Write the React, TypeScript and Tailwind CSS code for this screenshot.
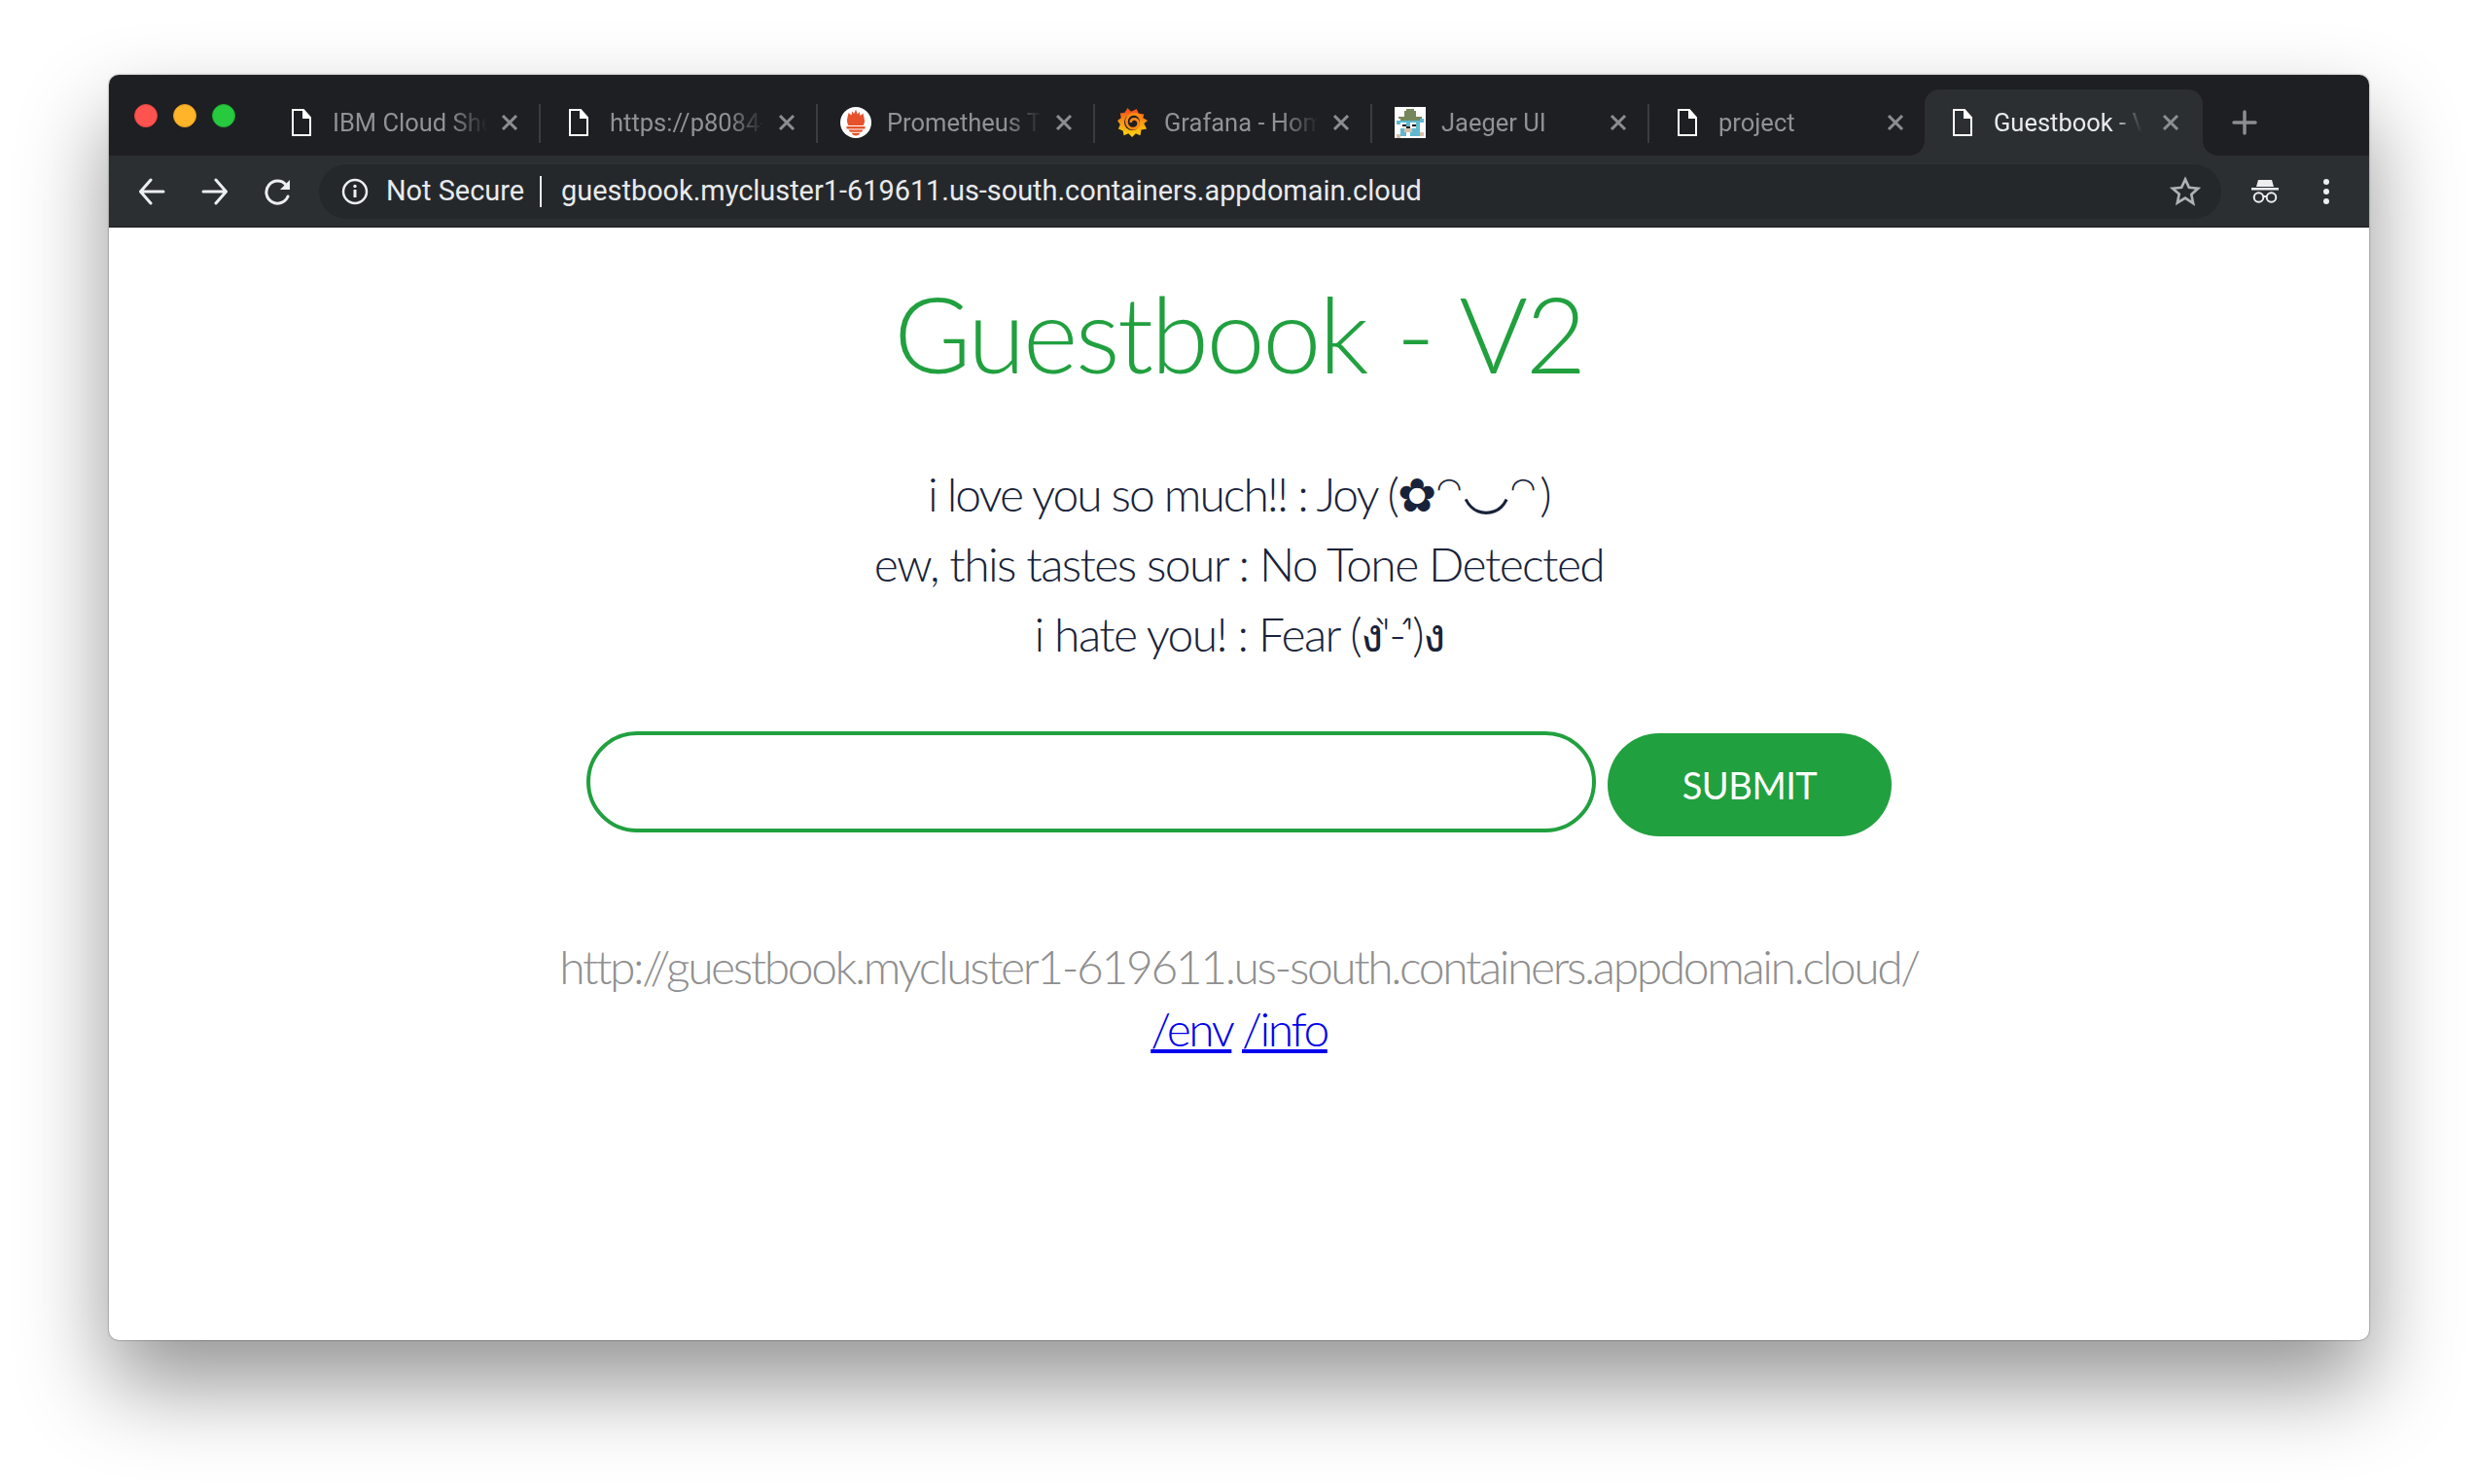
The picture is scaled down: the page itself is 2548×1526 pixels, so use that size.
import type { ReactNode } from "react";

const GREEN = "#21a03f";

function DocIcon() {
  return (
    <svg width="20" height="28" viewBox="0 0 20 28" fill="none" stroke="#fff" strokeWidth="2">
      <path d="M1 1h11l7 8v18H1z" />
      <path d="M12 1v8h7" fill="#fff" />
    </svg>
  );
}

function PrometheusIcon() {
  return (
    <svg width="32" height="32" viewBox="0 0 32 32">
      <circle cx="16" cy="16" r="16" fill="#fff" />
      <path
        d="M16 2.500l1.800 5 2-2.500.7 4 3-2.500c.5 3.500 1.500 5 1.500 8 0 1.700-.6 3.200-1.400 4.500H8.400C7.600 17.200 7 15.700 7 14c0-3 1-4.500 1.500-8l3 2.500.7-4 2 2.500z"
        fill="#e6522c"
      />
      <path d="M6.500 20h19v2.500h-19zM8.500 23.500h15L22 25.800H10zM11.500 26.800h9c-.6 1.500-2.500 2.700-4.500 2.700s-3.900-1.200-4.500-2.700z" fill="#e6522c" />
    </svg>
  );
}

function GrafanaIcon() {
  return (
    <svg width="34" height="34" viewBox="0 0 34 34">
      <defs>
        <linearGradient id="grafana-fill" x1="0" y1="0" x2="0" y2="1">
          <stop offset="0" stopColor="#f0441c" />
          <stop offset="0.5" stopColor="#fb9a12" />
          <stop offset="1" stopColor="#fdd80f" />
        </linearGradient>
      </defs>
      <path
        d="M11 1l4 4 6-3 2 5 6 1-1 4 5 3-4 3 3 6-6 1-1 6-5-2-4 4-4-4-5 2-1-5-5-2 2-5-3-4 4-3-1-5 5-1z"
        fill="url(#grafana-fill)"
      />
      <circle cx="16" cy="17" r="8.500" fill="#1e1f23" />
      <path
        d="M26 12c-2-3-5.500-4.500-9-4-4.500.6-7.500 4.500-7 9 .4 4 4 7 8 6.500 3.300-.4 5.500-3.300 5-6.300-.4-2.700-2.800-4.500-5.300-4-2 .3-3.300 2-3 3.800"
        stroke="#fb8a14"
        strokeWidth="2.800"
        fill="none"
      />
    </svg>
  );
}

// little pixel gopher with a hat, the Jaeger favicon
function JaegerIcon() {
  return (
    <svg width="32" height="32" viewBox="0 0 16 16" shapeRendering="crispEdges">
      <rect width="16" height="16" fill="#fff" />
      <path d="M3 6h10v9H3zM1 7h2v2H1zM13 6h2v2h-2z" fill="#5fb8d0" />
      <path d="M6 1h4v1h1v3h3v1h-1v1H3V6H2V5h3V2h1z" fill="#76885b" />
      <path d="M3 8h3v3H3zM8 8h3v3H8z" fill="#fff" />
      <path d="M4 9h2v1H4zM9 9h2v1H9z" fill="#111" />
      <path d="M6 10h2v1h1v2H5v-2h1z" fill="#d8c0a8" />
      <path d="M6 10h2v1H6z" fill="#222" />
      <path d="M6 13h2v2H6z" fill="#fff" />
      <path d="M1 14h2v2H1zM13 13h2v2h-2z" fill="#d8c0a8" />
    </svg>
  );
}

function CloseIcon() {
  return (
    <svg width="18" height="16" viewBox="0 0 18 16" stroke="#8a8d91" strokeWidth="3" className="shrink-0">
      <path d="M2 1l14 14M16 1L2 15" />
    </svg>
  );
}

type TabProps = { icon: ReactNode; title: string; active?: boolean; last?: boolean };

function Tab({ icon, title, active, last }: TabProps) {
  const width = active ? "w-[286px] rounded-t-[15px] bg-[#2b2f32]" : last ? "w-[283px]" : "w-[285px]";
  return (
    <div className={`relative flex h-[68px] items-center ${width}`}>
      <div className="flex w-[72px] shrink-0 justify-center pl-[10px] pr-[4px]">
        <div className="flex w-[32px] justify-center">{icon}</div>
      </div>
      <div
        className={
          active
            ? "-ml-[1px] w-[173px] overflow-hidden whitespace-nowrap text-[25.500px] text-[#e8eaed] [mask-image:linear-gradient(to_right,black_70%,transparent_88%)]"
            : "-ml-[1px] w-[173px] overflow-hidden whitespace-nowrap text-[25.500px] text-[#8f9296] [mask-image:linear-gradient(to_right,black_70%,transparent_92%)]"
        }
      >
        {title}
      </div>
      <CloseIcon />
      {!active && !last && <div className="absolute right-0 top-[15px] h-[40px] w-[2px] bg-[#3a3c40]" />}
      {active && (
        <>
          <div className="absolute bottom-0 left-[-15px] h-[15px] w-[15px] bg-[radial-gradient(circle_at_0_0,transparent_14.500px,#2b2f32_15px)]" />
          <div className="absolute bottom-0 right-[-15px] h-[15px] w-[15px] bg-[radial-gradient(circle_at_100%_0,transparent_14.500px,#2b2f32_15px)]" />
        </>
      )}
    </div>
  );
}

function Nav({ d }: { d: string }) {
  return (
    <svg width="28" height="28" viewBox="0 0 28 28" fill="none" stroke="#eceef0" strokeWidth="3" strokeLinecap="round" strokeLinejoin="round">
      <path d={d} />
    </svg>
  );
}

export default function App() {
  return (
    <div className="h-[1526px] w-[2548px] overflow-hidden bg-white pl-[112px] pt-[77px] font-['Lato','Noto_Sans',sans-serif]">
      <div className="flex h-[1301px] w-[2324px] flex-col overflow-hidden rounded-[10px] bg-white shadow-[0_46px_90px_rgba(0,0,0,0.42),0_0_2px_rgba(0,0,0,0.55)]">
        {/* tab strip */}
        <div className="flex h-[83px] shrink-0 items-end bg-[#1e1f23] font-['Roboto',sans-serif]">
          <div className="flex w-[159px] shrink-0 gap-[16px] self-start pl-[26px] pt-[30px]">
            <div className="h-[24px] w-[24px] rounded-full border border-[#e5453f] bg-[#ff5350]" />
            <div className="h-[24px] w-[24px] rounded-full border border-[#e09d22] bg-[#ffb429]" />
            <div className="h-[24px] w-[24px] rounded-full border border-[#1fac30] bg-[#27c93f]" />
          </div>
          <Tab icon={<DocIcon />} title="IBM Cloud Shell" />
          <Tab icon={<DocIcon />} title="https://p8084-abc" />
          <Tab icon={<PrometheusIcon />} title="Prometheus Time" />
          <Tab icon={<GrafanaIcon />} title="Grafana - Home" />
          <Tab icon={<JaegerIcon />} title="Jaeger UI" />
          <Tab icon={<DocIcon />} title="project" last />
          <Tab icon={<DocIcon />} title="Guestbook - V2" active />
          <svg width="26" height="26" viewBox="0 0 26 26" stroke="#8a8d91" strokeWidth="3.500" strokeLinecap="round" className="mb-[21px] ml-[30px]">
            <path d="M13 2v22M2 13h22" />
          </svg>
        </div>

        {/* toolbar */}
        <div className="flex h-[74px] shrink-0 items-center border-b border-[#1a1b1e] bg-[#2b2f32] font-['Roboto',sans-serif]">
          <div className="flex w-[216px] shrink-0 items-center gap-[37px] pl-[30px]">
            <Nav d="M26 14H3M13 2L2.500 14 13 26" />
            <Nav d="M2 14h23M15 2l10.500 12L15 26" />
            <svg width="28" height="28" viewBox="0 0 28 28" fill="none" stroke="#eceef0" strokeWidth="3" strokeLinecap="round">
              <path d="M24 19a11.500 11.500 0 1 1-2-12" />
              <path d="M26 2v10H16z" fill="#eceef0" stroke="none" />
            </svg>
          </div>
          <div className="flex h-[56px] w-[1956px] shrink-0 items-center rounded-full bg-[#25282b] pl-[23px] pr-[21px] text-[#e8eaed]">
            <svg width="28" height="28" viewBox="0 0 28 28" fill="none" stroke="#eceef0" strokeWidth="2.500" className="shrink-0">
              <circle cx="14" cy="14" r="12" />
              <path d="M14 12v8" strokeWidth="3" />
              <circle cx="14" cy="8.500" r="1.700" fill="#eceef0" stroke="none" />
            </svg>
            <span className="ml-[18px] whitespace-nowrap text-[28.900px]">Not Secure</span>
            <div className="ml-[16px] h-[32px] w-[2px] bg-[#e8eaed]" />
            <span className="ml-[20px] whitespace-nowrap text-[28.900px]">guestbook.mycluster1-619611.us-south.containers.appdomain.cloud</span>
            <svg width="32" height="32" viewBox="0 0 24 24" fill="none" stroke="#aeb1b6" strokeWidth="2" className="ml-auto shrink-0">
              <path d="M12 2.500l2.900 6.300 6.900.8-5.100 4.700 1.400 6.800L12 17l-6.100 3.600 1.400-6.800L2.200 9.600l6.900-.8z" />
            </svg>
          </div>
          <svg width="28" height="26" viewBox="0 0 28 26" className="ml-[31px] shrink-0" fill="#eceef0">
            <path d="M7 1h14l2 7H5z" />
            <rect x="0" y="9" width="28" height="2.500" />
            <circle cx="7.500" cy="19" r="4.800" fill="none" stroke="#eceef0" strokeWidth="2" />
            <circle cx="20.500" cy="19" r="4.800" fill="none" stroke="#eceef0" strokeWidth="2" />
            <path d="M12 18h4" stroke="#eceef0" strokeWidth="2" />
          </svg>
          <div className="ml-[46px] flex shrink-0 flex-col gap-[4px]">
            <div className="h-[6px] w-[6px] rounded-full bg-[#eceef0]" />
            <div className="h-[6px] w-[6px] rounded-full bg-[#eceef0]" />
            <div className="h-[6px] w-[6px] rounded-full bg-[#eceef0]" />
          </div>
        </div>

        {/* page */}
        <main className="flex flex-col items-center bg-white">
          <h1 className="mt-[43px] text-[108px] font-light leading-[130px] tracking-[-2.500px] text-[#21a03f] [word-spacing:4px]">Guestbook - V2</h1>
          <div className="mt-[57px] flex flex-col items-center text-[48px] font-light leading-[72px] tracking-[-1.600px] text-[#18233a]">
            <p>
              <span className="tracking-[-2px]">i love you so much!! : Joy (</span>✿
              <span className="ml-[2px] align-[14px] text-[30px]">◠</span>
              <span className="ml-[2px] align-[16px] text-[80px] leading-[0]">‿</span>
              <span className="ml-[2px] mr-[6px] align-[14px] text-[30px]">◠</span>)
            </p>
            <p>ew, this tastes sour : No Tone Detected</p>
            <p>i hate you! : Fear (ง'̀-'́)ง</p>
          </div>
          <form className="mt-[64px] flex items-start gap-[12px]">
            <input className="h-[104px] w-[1038px] rounded-full border-4 border-[#21a03f] bg-white outline-none" />
            <button type="button" style={{ backgroundColor: GREEN }} className="mt-[2px] h-[106px] w-[292px] rounded-full text-[38px] tracking-[-0.500px] text-white">
              SUBMIT
            </button>
          </form>
          <p className="mt-[102px] text-[48px] font-light leading-[64px] tracking-[-2.400px] text-[#8f8f8f]">http://guestbook.mycluster1-619611.us-south.containers.appdomain.cloud/</p>
          <p className="text-[48px] font-light leading-[64px] tracking-[-2.400px]">
            <a className="text-[#0000ee] underline">/env</a> <a className="text-[#0000ee] underline">/info</a>
          </p>
        </main>
      </div>
    </div>
  );
}
